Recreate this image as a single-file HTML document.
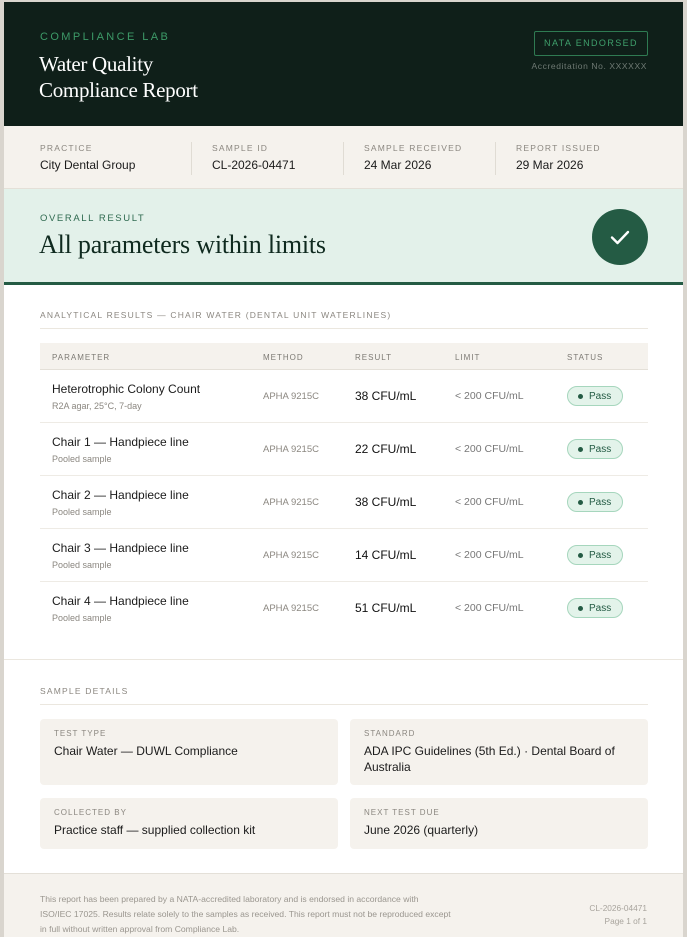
<!DOCTYPE html>
<html><head><meta charset="utf-8"><style>
*{box-sizing:border-box;margin:0;padding:0}
body{width:687px;height:937px;background:#d9d5ce;font-family:"Liberation Sans",sans-serif;position:relative;overflow:hidden}
.card{position:absolute;left:4px;top:2px;width:679px;height:935px;background:#fff}
.abs{position:absolute}
.serif{font-family:"Liberation Serif",serif}
.lbl{font-size:8.5px;letter-spacing:1.2px;color:#8b8780;text-transform:uppercase}
.hdr{left:0;top:0;width:679px;height:124px;background:#0f1f19}
.meta{left:0;top:124px;width:679px;height:63px;background:#f5f2ed;border-bottom:1px solid #e4e0d8}
.res{left:0;top:187px;width:679px;height:96px;background:#e3f1ea;border-bottom:3px solid #245b44}
.th{font-size:8px;letter-spacing:1px;color:#7d7a74}
.row{position:absolute;left:36px;width:608px;height:53px;border-bottom:1px solid #eeebe5}
.row .p{position:absolute;left:12px;top:12px;font-size:12px;color:#1b1b1b}
.row .s{position:absolute;left:12px;top:31px;font-size:9px;color:#8b8780}
.row .m{position:absolute;left:223px;top:21px;font-size:9.5px;color:#8b8780}
.row .r{position:absolute;left:315px;top:19px;font-size:12px;color:#111}
.row .l{position:absolute;left:415px;top:20px;font-size:10.5px;color:#777}
.pass{position:absolute;left:527px;top:16px;width:56px;height:20px;border:1px solid #a6d6bd;background:#e3f3ea;border-radius:10px;font-size:10px;color:#245b44;padding-left:21px;line-height:19px}
.pass:before{content:"";position:absolute;left:10px;top:7px;width:5px;height:5px;border-radius:50%;background:#245b44}
.box{position:absolute;background:#f5f2ed;border-radius:4px;padding:10px 14px}
.box .lbl{font-size:8px;letter-spacing:1px}
.box .v{font-size:12px;color:#1b1b1b;margin-top:5px;line-height:16px}
</style></head><body>
<div class="card">
<div class="abs hdr">
 <div class="abs" style="left:36px;top:29px;font-size:11px;letter-spacing:2.4px;color:#3d9a68">COMPLIANCE LAB</div>
 <div class="abs serif" style="left:35px;top:49px;font-size:21px;line-height:26px;color:#fff;letter-spacing:-0.3px">Water Quality<br>Compliance Report</div>
 <div class="abs" style="left:530px;top:29px;width:114px;height:25px;border:1px solid #2f7a52;border-radius:2px;color:#3fa06c;font-size:9px;letter-spacing:1.4px;text-align:center;line-height:23px">NATA ENDORSED</div>
 <div class="abs" style="right:36px;top:59px;font-size:8.5px;letter-spacing:0.6px;color:#6f7a74">Accreditation No. XXXXXX</div>
</div>
<div class="abs meta">
 <div class="abs" style="left:36px;top:17px"><div class="lbl">Practice</div><div style="font-size:12px;color:#1b1b1b;margin-top:5px">City Dental Group</div></div>
 <div class="abs" style="left:187px;top:16px;height:33px;border-left:1px solid #e0dcd4;width:1px"></div>
 <div class="abs" style="left:208px;top:17px"><div class="lbl">Sample ID</div><div style="font-size:12px;color:#1b1b1b;margin-top:5px">CL-2026-04471</div></div>
 <div class="abs" style="left:339px;top:16px;height:33px;border-left:1px solid #e0dcd4;width:1px"></div>
 <div class="abs" style="left:360px;top:17px"><div class="lbl">Sample Received</div><div style="font-size:12px;color:#1b1b1b;margin-top:5px">24 Mar 2026</div></div>
 <div class="abs" style="left:491px;top:16px;height:33px;border-left:1px solid #e0dcd4;width:1px"></div>
 <div class="abs" style="left:512px;top:17px"><div class="lbl">Report Issued</div><div style="font-size:12px;color:#1b1b1b;margin-top:5px">29 Mar 2026</div></div>
</div>
<div class="abs res">
 <div class="abs" style="left:36px;top:24px;font-size:9.5px;letter-spacing:1.6px;color:#2f6a50">OVERALL RESULT</div>
 <div class="abs serif" style="left:35px;top:41px;font-size:26px;color:#0f2a1f;letter-spacing:-0.2px">All parameters within limits</div>
 <div class="abs" style="left:588px;top:20px;width:56px;height:56px;border-radius:50%;background:#245b44">
  <svg width="56" height="56" viewBox="0 0 56 56"><path d="M20 28.5l5.5 5.5 10.5-11" fill="none" stroke="#fff" stroke-width="2.4" stroke-linecap="round" stroke-linejoin="round"/></svg>
 </div>
</div>
<div class="abs" style="left:36px;top:308px;width:608px;height:19px;border-bottom:1px solid #ebe7df;font-size:8.5px;letter-spacing:1.2px;color:#8b8780">ANALYTICAL RESULTS — CHAIR WATER (DENTAL UNIT WATERLINES)</div>
<div class="abs" style="left:36px;top:341px;width:608px;height:27px;background:#f5f2ed;border-bottom:1px solid #e4e0d8">
 <span class="abs th" style="left:12px;top:10px">PARAMETER</span>
 <span class="abs th" style="left:223px;top:10px">METHOD</span>
 <span class="abs th" style="left:315px;top:10px">RESULT</span>
 <span class="abs th" style="left:415px;top:10px">LIMIT</span>
 <span class="abs th" style="left:527px;top:10px">STATUS</span>
</div>
<div class="row" style="top:368px"><div class="p">Heterotrophic Colony Count</div><div class="s">R2A agar, 25°C, 7-day</div><div class="m">APHA 9215C</div><div class="r">38 CFU/mL</div><div class="l">&lt; 200 CFU/mL</div><div class="pass">Pass</div></div>
<div class="row" style="top:421px"><div class="p">Chair 1 — Handpiece line</div><div class="s">Pooled sample</div><div class="m">APHA 9215C</div><div class="r">22 CFU/mL</div><div class="l">&lt; 200 CFU/mL</div><div class="pass">Pass</div></div>
<div class="row" style="top:474px"><div class="p">Chair 2 — Handpiece line</div><div class="s">Pooled sample</div><div class="m">APHA 9215C</div><div class="r">38 CFU/mL</div><div class="l">&lt; 200 CFU/mL</div><div class="pass">Pass</div></div>
<div class="row" style="top:527px"><div class="p">Chair 3 — Handpiece line</div><div class="s">Pooled sample</div><div class="m">APHA 9215C</div><div class="r">14 CFU/mL</div><div class="l">&lt; 200 CFU/mL</div><div class="pass">Pass</div></div>
<div class="row" style="top:580px;border-bottom:none"><div class="p">Chair 4 — Handpiece line</div><div class="s">Pooled sample</div><div class="m">APHA 9215C</div><div class="r">51 CFU/mL</div><div class="l">&lt; 200 CFU/mL</div><div class="pass">Pass</div></div>
<div class="abs" style="left:0;top:657px;width:679px;border-top:1px solid #ebe7df"></div>
<div class="abs" style="left:36px;top:684px;width:608px;height:19px;border-bottom:1px solid #ebe7df;font-size:8.5px;letter-spacing:1.2px;color:#8b8780">SAMPLE DETAILS</div>
<div class="box" style="left:36px;top:717px;width:298px;height:66px"><div class="lbl">Test Type</div><div class="v">Chair Water — DUWL Compliance</div></div>
<div class="box" style="left:346px;top:717px;width:298px;height:66px"><div class="lbl">Standard</div><div class="v">ADA IPC Guidelines (5th Ed.) · Dental Board of Australia</div></div>
<div class="box" style="left:36px;top:796px;width:298px;height:51px"><div class="lbl">Collected By</div><div class="v">Practice staff — supplied collection kit</div></div>
<div class="box" style="left:346px;top:796px;width:298px;height:51px"><div class="lbl">Next Test Due</div><div class="v">June 2026 (quarterly)</div></div>
<div class="abs" style="left:0;top:871px;width:679px;height:64px;background:#f5f2ed;border-top:1px solid #e4e0d8">
 <div class="abs" style="left:36px;top:18px;width:412px;font-size:8.6px;line-height:15px;color:#9a968f">This report has been prepared by a NATA-accredited laboratory and is endorsed in accordance with ISO/IEC 17025. Results relate solely to the samples as received. This report must not be reproduced except in full without written approval from Compliance Lab.</div>
 <div class="abs" style="right:36px;top:28px;font-size:8.3px;line-height:13px;color:#a8a49d;text-align:right">CL-2026-04471<br>Page 1 of 1</div>
</div>
</div>
</body></html>
